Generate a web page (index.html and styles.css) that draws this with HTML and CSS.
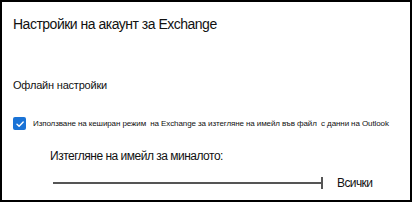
FILE: index.html
```html
<!DOCTYPE html>
<html lang="bg">
<head>
<meta charset="utf-8">
<link rel="stylesheet" href="styles.css">
</head>
<body>
<div class="panel">
  <div class="title">Настройки на акаунт за Exchange</div>
  <div class="section">Офлайн настройки</div>
  <label class="check-row">
    <span class="checkbox">
      <svg viewBox="0 0 12 12" width="12" height="12"><path d="M3 6.2 L5.1 8.2 L9.2 4" fill="none" stroke="#fff" stroke-width="1.4" stroke-linecap="round" stroke-linejoin="round"/></svg>
    </span>
    <span class="check-text">Използване на кеширан режим&nbsp; на Exchange за изтегляне на имейл във файл&nbsp; с данни на Outlook</span>
  </label>
  <div class="slider-block">
    <div class="slider-label">Изтегляне на имейл за миналото:</div>
    <div class="slider-row">
      <div class="track"><span class="tick"></span></div>
      <span class="value">Всички</span>
    </div>
  </div>
</div>
</body>
</html>
```
FILE: styles.css
```css
html, body {
  margin: 0;
  padding: 0;
  background: #fff;
}
.panel {
  box-sizing: border-box;
  width: 412px;
  height: 202px;
  border: 2px solid #000;
  font-family: "Liberation Sans", Arial, sans-serif;
  color: #111;
  padding: 13px 0 0 11px;
}
.title {
  font-size: 14px;
  line-height: 18px;
  letter-spacing: -0.5px;
}
.section {
  font-size: 11px;
  line-height: 14px;
  letter-spacing: -0.2px;
  margin-top: 45px;
}
.check-row {
  display: flex;
  align-items: center;
  margin-top: 25px;
}
.checkbox {
  width: 13px;
  height: 13px;
  border-radius: 2px;
  background: #1a73d6;
  display: flex;
  align-items: center;
  justify-content: center;
  flex: none;
}
.check-text {
  font-size: 8px;
  margin-left: 7px;
  letter-spacing: -0.1px;
}
.slider-block {
  padding-left: 37px;
  margin-top: 19px;
}
.slider-label {
  font-size: 12px;
  line-height: 15px;
  letter-spacing: -0.5px;
}
.slider-row {
  display: flex;
  align-items: center;
  margin-top: 12px;
}
.track {
  position: relative;
  width: 270px;
  height: 2px;
  background: #555;
  margin-left: 3px;
}
.tick {
  position: absolute;
  right: 0;
  top: -5px;
  width: 2px;
  height: 12px;
  background: #555;
}
.value {
  font-size: 12px;
  line-height: 14px;
  letter-spacing: -0.6px;
  margin-left: 14px;
}
```
